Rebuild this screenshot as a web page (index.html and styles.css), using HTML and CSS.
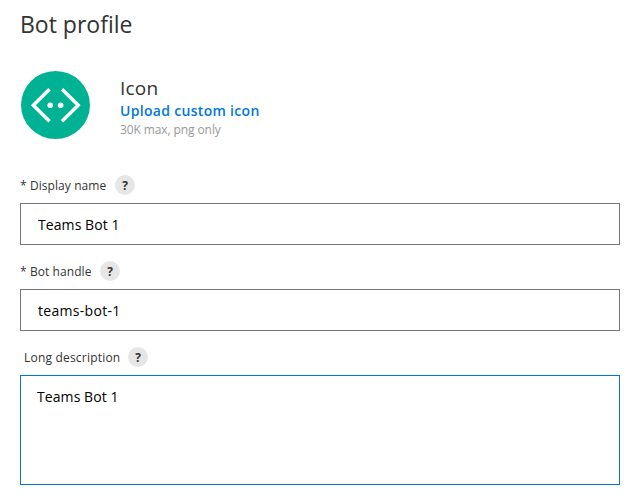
FILE: index.html
```html
<!DOCTYPE html>
<html lang="en">
<head>
<meta charset="utf-8">
<title>Bot profile</title>
<link rel="stylesheet" href="styles.css">
</head>
<body>
<main class="profile">
  <h1 class="title">Bot profile</h1>
  <section class="icon-row">
    <svg class="bot-icon" viewBox="0 0 69 68" aria-hidden="true">
      <ellipse cx="34.5" cy="34" rx="34.5" ry="34" fill="#00b294"/>
      <path d="M28.5 18.3 12.3 34.3l16.2 16M41 18.3l16.2 16L41 50.3" fill="none" stroke="#fff" stroke-width="3.5"/>
      <circle cx="29.2" cy="34.3" r="2.8" fill="#fff"/>
      <circle cx="39.6" cy="34.3" r="2.8" fill="#fff"/>
    </svg>
    <div class="icon-text">
      <h2 class="icon-title">Icon</h2>
      <a class="upload">Upload custom icon</a>
      <span class="hint">30K max, png only</span>
    </div>
  </section>
  <form class="fields">
    <div class="field">
      <div class="label-row"><label class="label label-display" for="name">* Display name</label><span class="help">?</span></div>
      <input class="input" id="name" value="Teams Bot 1">
    </div>
    <div class="field">
      <div class="label-row"><label class="label label-handle" for="handle">* Bot handle</label><span class="help">?</span></div>
      <input class="input input-handle" id="handle" value="teams-bot-1">
    </div>
    <div class="field">
      <div class="label-row"><label class="label label-long" for="description">Long description</label><span class="help">?</span></div>
      <textarea class="input area" id="description">Teams Bot 1</textarea>
    </div>
  </form>
</main>
</body>
</html>
```
FILE: styles.css
```css
* { box-sizing: border-box; }
body {
  margin: 0;
  background: #fff;
  color: #333;
  font-family: "Open Sans", "Noto Sans", sans-serif;
}
.profile { padding: 8px 21px 0 20px; }
.title {
  margin: 0;
  height: 32px;
  line-height: 32px;
  font-size: 23px;
  font-weight: 400;
}
.icon-row {
  display: flex;
  height: 68px;
  margin-top: 31px;
  padding-left: 1px;
}
.bot-icon { width: 69px; height: 68px; }
.icon-text {
  display: flex;
  flex-direction: column;
  align-items: flex-start;
  margin-left: 30px;
  padding-top: 5px;
}
.icon-title {
  margin: 0;
  font-size: 19px;
  font-weight: 400;
  line-height: 25px;
  letter-spacing: 0.2px;
}
.upload {
  color: #0078d7;
  font-size: 14px;
  font-weight: 600;
  line-height: 20px;
  letter-spacing: 0.31px;
}
.hint {
  color: #999;
  font-size: 12px;
  line-height: 17px;
  letter-spacing: -0.1px;
}
.fields {
  display: flex;
  flex-direction: column;
  gap: 16px;
  margin-top: 36px;
}
.field {
  display: flex;
  flex-direction: column;
  gap: 8px;
}
.label-row {
  display: flex;
  align-items: center;
  height: 20px;
}
.label {
  padding-top: 2px;
  font-size: 12px;
  line-height: 20px;
  white-space: nowrap;
  letter-spacing: 0.08px;
}
.label-display { width: 95px; }
.label-handle { width: 80px; }
.label-long { width: 108px; padding-left: 4px; letter-spacing: 0.2px; }
.help {
  width: 20px;
  height: 20px;
  border-radius: 50%;
  background: #e6e6e6;
  font-size: 12px;
  font-weight: 700;
  line-height: 21px;
  text-align: center;
}
.input {
  display: block;
  width: 100%;
  height: 42px;
  margin: 0;
  padding: 0 17px;
  border: 1px solid #767676;
  border-radius: 0;
  outline: 0;
  background: #fff;
  color: #000;
  font: 14px "Open Sans", "Noto Sans", sans-serif;
  letter-spacing: 0.08px;
}
.input-handle { letter-spacing: 0.3px; }
.area {
  height: 110px;
  padding: 11px 16px;
  border-color: #0078d7;
  line-height: 20px;
  resize: none;
}
```
